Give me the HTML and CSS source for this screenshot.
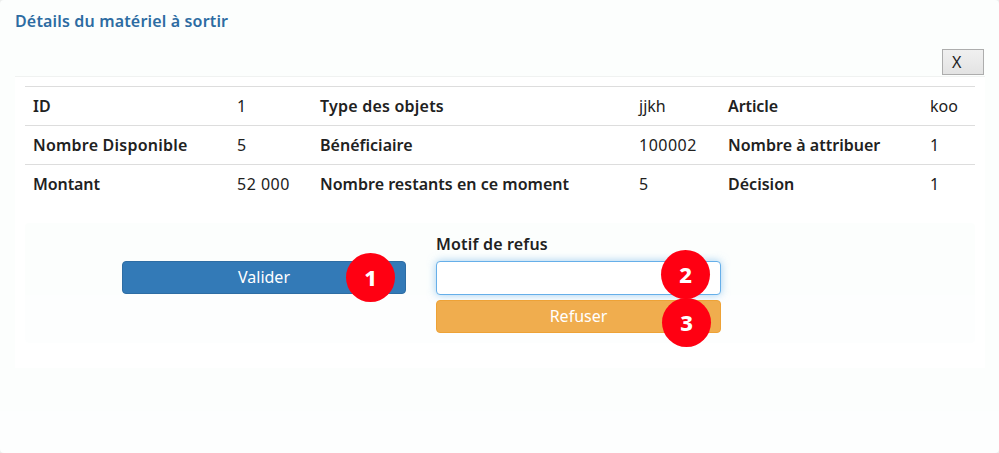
FILE: index.html
```html
<!DOCTYPE html>
<html lang="fr">
<head>
<meta charset="utf-8">
<title>Détails du matériel à sortir</title>
<link rel="stylesheet" href="styles.css">
</head>
<body>
<main class="panel">
  <h1 class="title">Détails du matériel à sortir</h1>
  <div class="toolbar"><button class="close" type="button">X</button></div>
  <section class="content">
    <table class="details">
      <colgroup><col class="c1"><col class="c2"><col class="c3"><col class="c4"><col class="c5"><col class="c6"></colgroup>
      <tbody>
        <tr><th>ID</th><td>1</td><th class="wide">Type des objets</th><td>jjkh</td><th class="tight">Article</th><td>koo</td></tr>
        <tr><th class="wide">Nombre Disponible</th><td>5</td><th>Bénéficiaire</th><td class="number">100002</td><th>Nombre à attribuer</th><td>1</td></tr>
        <tr><th class="tight">Montant</th><td class="number">52 000</td><th>Nombre restants en ce moment</th><td>5</td><th>Décision</th><td>1</td></tr>
      </tbody>
    </table>
    <form class="well">
      <div class="accept">
        <button class="btn primary" type="button">Valider</button>
        <span class="badge one">1</span>
      </div>
      <div class="refuse">
        <label class="label" for="motif">Motif de refus</label>
        <input class="field" id="motif" type="text">
        <button class="btn warning" type="button">Refuser</button>
        <span class="badge two">2</span>
        <span class="badge three">3</span>
      </div>
    </form>
  </section>
</main>
</body>
</html>
```
FILE: styles.css
```css
* { box-sizing: border-box; }
body {
  margin: 0;
  background: #eceeed;
  color: #212121;
  font: 16px/22px "Noto Sans", "Open Sans", sans-serif;
}
.panel {
  height: 453px;
  padding: 10px 14px 0 15px;
  border-radius: 4px;
  background: linear-gradient(#fcfefd 0 411px, #fdfefe 411px);
}
.title {
  margin: 0;
  color: #2d6ca2;
  font-size: 16px;
  font-weight: 600;
  line-height: 22px;
  letter-spacing: .16px;
}
.toolbar {
  display: flex;
  justify-content: flex-end;
  height: 44px;
  padding: 17px 1px 0 0;
}
.close {
  width: 42px;
  height: 26px;
  padding: 0 0 0 9px;
  border: 1px solid #adadad;
  background: linear-gradient(#f0f0f0, #e3e3e3);
  color: #212121;
  font: inherit;
  text-align: left;
}
.content {
  height: 292px;
  padding: 9px 10px 0;
  border-top: 1px solid #f0f2f1;
  background: #fff;
}
.details {
  width: 950px;
  table-layout: fixed;
  border-collapse: separate;
  border-spacing: 0;
  letter-spacing: .02px;
}
.c1 { width: 204px; }
.c2 { width: 83px; }
.c3 { width: 319px; }
.c4 { width: 89px; }
.c5 { width: 202px; }
.c6 { width: 53px; }
th, td {
  height: 39px;
  padding: 0 8px;
  border-top: 1px solid #ddd;
  text-align: left;
  white-space: nowrap;
}
th { font-weight: 600; }
.wide { letter-spacing: .22px; }
.tight { letter-spacing: -.1px; }
.number { letter-spacing: .5px; }
.well {
  display: grid;
  grid-template-columns: 284px 285px;
  column-gap: 30px;
  height: 120px;
  margin-top: 20px;
  padding: 10px 0 0 97px;
  border-radius: 4px;
  background: linear-gradient(#fcfefd 0 72px, #fdfefe 72px);
}
.accept, .refuse { position: relative; }
.accept { padding-top: 28px; }
.btn, .field {
  display: block;
  width: 100%;
  height: 33px;
  padding: 0;
  border-radius: 4px;
  font: inherit;
}
.btn {
  padding-bottom: 2px;
  border: 1px solid;
  color: #fff;
}
.primary { border-color: #2e6da4; background: #337ab7; }
.warning { margin-top: 5px; border-color: #eea236; background: #f0ad4e; }
.label {
  display: block;
  height: 28px;
  font-weight: 600;
  line-height: 22px;
  letter-spacing: .18px;
}
.field {
  height: 34px;
  padding: 0 12px;
  border: 1px solid #66afe9;
  background: #fff;
  box-shadow: 0 0 8px rgba(102, 175, 233, .6);
}
.badge {
  position: absolute;
  width: 49px;
  height: 49px;
  border-radius: 50%;
  background: #ff0012;
  color: #fff;
  font: 800 22px/49px "Noto Sans", "Open Sans", sans-serif;
  text-align: center;
}
.one { top: 20px; left: 224px; }
.two { top: 17px; left: 225px; }
.three { top: 65px; left: 226px; }
```
